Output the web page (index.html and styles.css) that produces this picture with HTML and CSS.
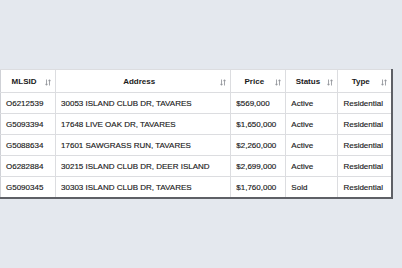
FILE: index.html
```html
<!DOCTYPE html>
<html>
<head>
<meta charset="utf-8">
<link rel="stylesheet" href="styles.css">
</head>
<body>
<div class="page">
  <table class="grid">
    <colgroup>
      <col class="c1"><col class="c2"><col class="c3"><col class="c4"><col class="c5">
    </colgroup>
    <thead>
      <tr>
        <th><span class="lbl">MLSID</span><svg class="sort" viewBox="0 0 6 7"><path d="M1.5 0.5V6M0.4 4.8L1.5 6.3L2.6 4.8M4.5 6.5V1M3.4 2.2L4.5 0.7L5.6 2.2"/></svg></th>
        <th><span class="lbl">Address</span><svg class="sort" viewBox="0 0 6 7"><path d="M1.5 0.5V6M0.4 4.8L1.5 6.3L2.6 4.8M4.5 6.5V1M3.4 2.2L4.5 0.7L5.6 2.2"/></svg></th>
        <th><span class="lbl">Price</span><svg class="sort" viewBox="0 0 6 7"><path d="M1.5 0.5V6M0.4 4.8L1.5 6.3L2.6 4.8M4.5 6.5V1M3.4 2.2L4.5 0.7L5.6 2.2"/></svg></th>
        <th><span class="lbl">Status</span><svg class="sort" viewBox="0 0 6 7"><path d="M1.5 0.5V6M0.4 4.8L1.5 6.3L2.6 4.8M4.5 6.5V1M3.4 2.2L4.5 0.7L5.6 2.2"/></svg></th>
        <th><span class="lbl">Type</span><svg class="sort" viewBox="0 0 6 7"><path d="M1.5 0.5V6M0.4 4.8L1.5 6.3L2.6 4.8M4.5 6.5V1M3.4 2.2L4.5 0.7L5.6 2.2"/></svg></th>
      </tr>
    </thead>
    <tbody>
      <tr><td>O6212539</td><td>30053 ISLAND CLUB DR, TAVARES</td><td>$569,000</td><td>Active</td><td>Residential</td></tr>
      <tr><td>G5093394</td><td>17648 LIVE OAK DR, TAVARES</td><td>$1,650,000</td><td>Active</td><td>Residential</td></tr>
      <tr><td>G5088634</td><td>17601 SAWGRASS RUN, TAVARES</td><td>$2,260,000</td><td>Active</td><td>Residential</td></tr>
      <tr><td>O6282884</td><td>30215 ISLAND CLUB DR, DEER ISLAND</td><td>$2,699,000</td><td>Active</td><td>Residential</td></tr>
      <tr><td>G5090345</td><td>30303 ISLAND CLUB DR, TAVARES</td><td>$1,760,000</td><td>Sold</td><td>Residential</td></tr>
    </tbody>
  </table>
</div>
</body>
</html>
```
FILE: styles.css
```css
html, body {
  margin: 0;
  padding: 0;
  background: #e4e8ee;
  width: 402px;
  height: 268px;
  overflow: hidden;
}
.page {
  padding-top: 69px;
}
.grid {
  border-collapse: collapse;
  table-layout: fixed;
  width: 393px;
  background: #fff;
  font-family: "Liberation Sans", Arial, sans-serif;
  font-size: 8px;
  color: #1a1a1a;
  border-right: 2px solid #5e6066;
  border-bottom: 2px solid #5e6066;
}
.c1 { width: 55px; }
.c2 { width: 175px; }
.c3 { width: 55px; }
.c4 { width: 52px; }
.c5 { width: 54px; }
th, td {
  border: 1px solid #dcdde0;
  padding: 0 0 0 5px;
  white-space: nowrap;
  overflow: hidden;
}
.grid tr > :first-child { border-left: 1px solid #cfd1d6; }
thead tr { border-top: 1px solid #e2e4e8; }
th {
  height: 21px;
  font-weight: bold;
  position: relative;
  text-align: center;
  padding: 1px 8px 0 0;
}
td {
  height: 20px;
  text-align: left;
  font-weight: 500;
  -webkit-text-stroke: 0.15px #1a1a1a;
}
.lbl {
  vertical-align: middle;
}
.sort {
  position: absolute;
  right: 4px;
  top: 9px;
  width: 6px;
  height: 7px;
  fill: none;
  stroke: #8a8d93;
  stroke-width: 0.8;
}
```
